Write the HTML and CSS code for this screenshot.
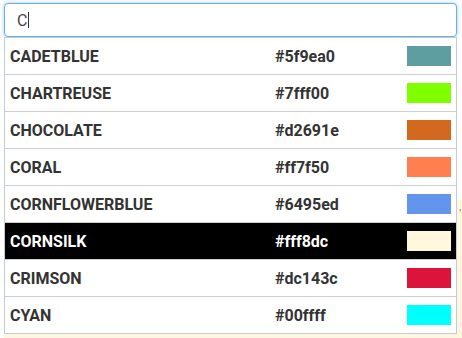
FILE: index.html
```html
<!DOCTYPE html>
<html>
<head>
<meta charset="utf-8">
<link rel="stylesheet" href="styles.css">
</head>
<body>
<div class="backdrop"><span class="mark">'</span></div>
<div class="combo">
  <div class="input"><span class="value">C</span><span class="caret"></span></div>
  <ul class="list">
    <li class="row"><span class="name">CADETBLUE</span><span class="hex">#5f9ea0</span><span class="swatch" style="background:#5f9ea0"></span></li>
    <li class="row"><span class="name">CHARTREUSE</span><span class="hex">#7fff00</span><span class="swatch" style="background:#7fff00"></span></li>
    <li class="row"><span class="name">CHOCOLATE</span><span class="hex">#d2691e</span><span class="swatch" style="background:#d2691e"></span></li>
    <li class="row"><span class="name">CORAL</span><span class="hex">#ff7f50</span><span class="swatch" style="background:#ff7f50"></span></li>
    <li class="row"><span class="name">CORNFLOWERBLUE</span><span class="hex">#6495ed</span><span class="swatch" style="background:#6495ed"></span></li>
    <li class="row active"><span class="name">CORNSILK</span><span class="hex">#fff8dc</span><span class="swatch" style="background:#fff8dc"></span></li>
    <li class="row"><span class="name">CRIMSON</span><span class="hex">#dc143c</span><span class="swatch" style="background:#dc143c"></span></li>
    <li class="row last"><span class="name">CYAN</span><span class="hex">#00ffff</span><span class="swatch" style="background:#00ffff"></span></li>
  </ul>
</div>
</body>
</html>
```
FILE: styles.css
```css
html, body {
  margin: 0;
  padding: 0;
  background: #fff;
  width: 462px;
  height: 338px;
  overflow: hidden;
  font-family: Roboto, "Liberation Sans", sans-serif;
}
body { position: relative; }
.backdrop {
  position: absolute;
  left: 4px;
  top: 200px;
  right: 0;
  bottom: 0;
  background: #fdf6e1;
}
.mark {
  position: absolute;
  right: 1px;
  top: 8px;
  font-size: 10px;
  color: #555;
}
.combo {
  position: relative;
  margin: 3px 0 0 4px;
  width: 453px;
}
.input {
  box-sizing: border-box;
  height: 34px;
  border: 1px solid #66afe9;
  border-radius: 4px;
  box-shadow: 0 0 4px rgba(102, 175, 233, 0.6);
  background: #fff;
  display: flex;
  align-items: center;
  padding-left: 12px;
  font-size: 16px;
  color: #444;
}
.caret {
  width: 1px;
  height: 16px;
  background: #333;
  margin-left: 1px;
}
.list {
  list-style: none;
  margin: 0;
  padding: 0;
  border: 1px solid #c3cbd8;
  background: #fff;
}
.row {
  display: flex;
  align-items: center;
  height: 36px;
  border-bottom: 1px solid #cfcfcf;
  font-weight: 700;
  font-size: 16px;
  color: #333;
}
.row.last { border-bottom: none; }
.row.active {
  background: #000;
  color: #fff;
}
.name {
  box-sizing: border-box;
  width: 270px;
  padding-left: 5px;
}
.hex {
  width: 132px;
}
.swatch {
  width: 44px;
  height: 20px;
}
```
